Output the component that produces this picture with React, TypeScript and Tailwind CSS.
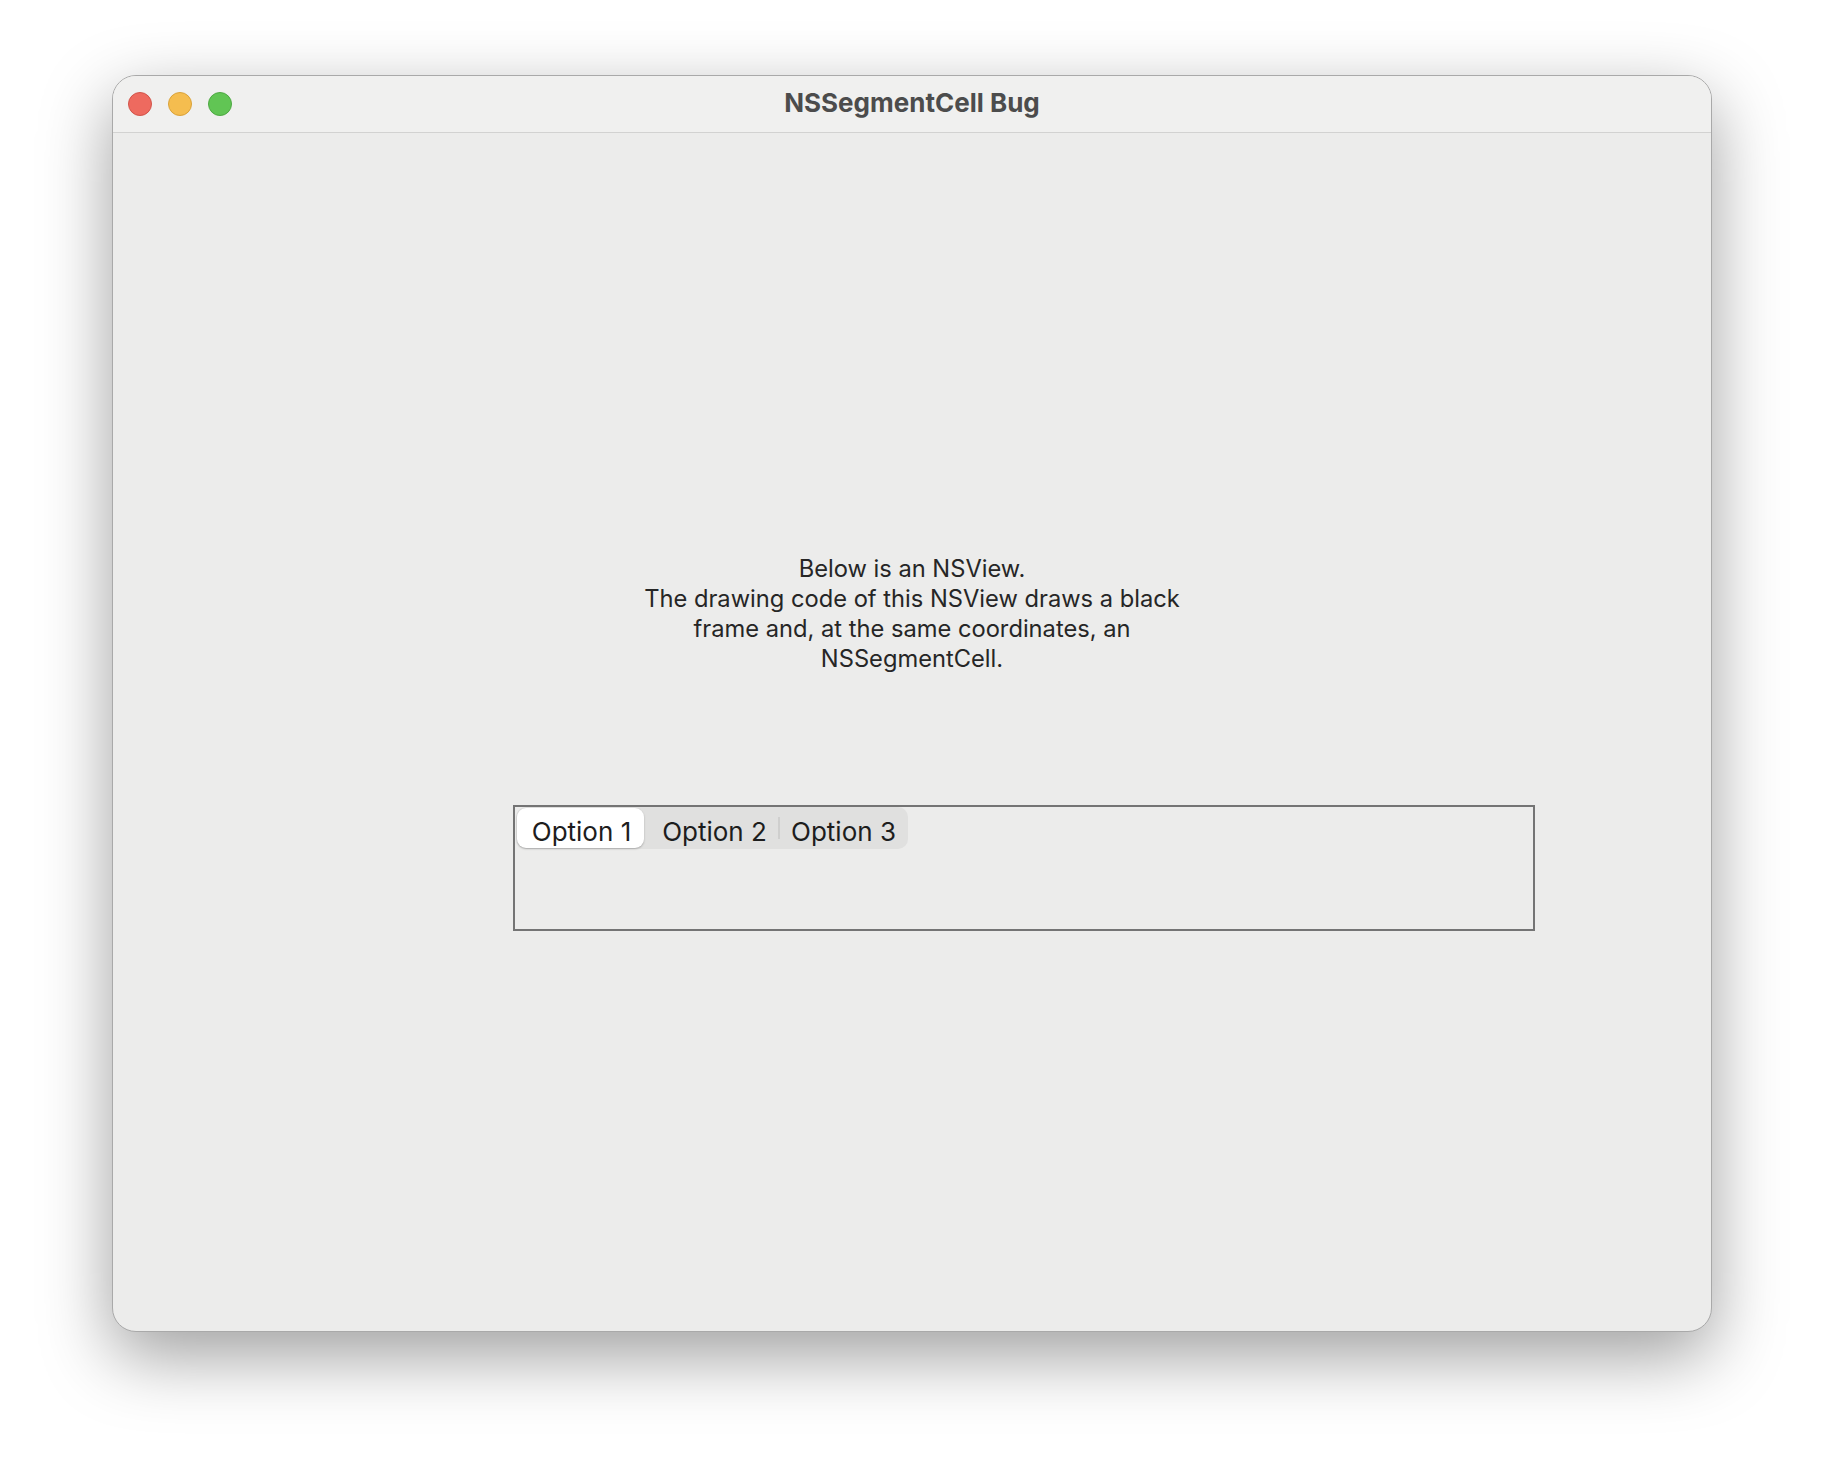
import React from "react";

const SF = "font-['Inter','Noto_Sans','Liberation_Sans',sans-serif]";

function TrafficLights() {
  return (
    <div className="flex items-center gap-[16px]">
      <span className="block h-[24px] w-[24px] rounded-full border border-[#d1544a] bg-[#ee6a5f]" />
      <span className="block h-[24px] w-[24px] rounded-full border border-[#d9a23a] bg-[#f5bd4f]" />
      <span className="block h-[24px] w-[24px] rounded-full border border-[#4ea843] bg-[#61c554]" />
    </div>
  );
}

function SegmentedControl() {
  return (
    <div className="flex h-[42px] w-[392px] items-stretch rounded-[10px] bg-[#e0e0df] p-[1px] text-[26px] text-[#1d1d1d]">
      <div className="flex w-[127px] items-center justify-center rounded-[9px] bg-white pt-[6px] pl-[2px] shadow-[0_1px_2px_rgba(0,0,0,0.25)]">
        Option 1
      </div>
      <div className="flex flex-1 items-center justify-center pt-[6px] pl-[7px]">
        Option 2
      </div>
      <div className="my-[9px] w-[2px] bg-[#cfcfce]" />
      <div className="flex flex-1 items-center justify-center pt-[6px]">
        Option 3
      </div>
    </div>
  );
}

export default function App() {
  return (
    <div className={`min-h-screen w-full bg-white pt-[75px] ${SF}`}>
      <div className="mx-auto flex h-[1257px] w-[1600px] flex-col overflow-hidden rounded-[24px] border border-[#a9a9a9] bg-[#ececeb] shadow-[0_24px_70px_rgba(0,0,0,0.38)]">
        {/* title bar */}
        <div className="relative flex h-[57px] shrink-0 items-center border-b border-[#d2d2d1] bg-[#f0f0ef] pl-[15px]">
          <TrafficLights />
          <div className="absolute inset-0 flex items-center justify-center pb-[4px] text-[26px] font-bold text-[#4c4c4c]">
            NSSegmentCell Bug
          </div>
        </div>

        {/* content */}
        <div className="flex flex-1 flex-col pt-[421px]">
          <p className="text-center text-[23.7px] leading-[30px] text-[#262626]">
            Below is an NSView.
            <br />
            The drawing code of this NSView draws a black
            <br />
            frame and, at the same coordinates, an
            <br />
            NSSegmentCell.
          </p>

          <div className="ml-[400px] mt-[131px] h-[126px] w-[1022px] border-2 border-[#747474] pl-[1px]">
            <SegmentedControl />
          </div>
        </div>
      </div>
    </div>
  );
}
